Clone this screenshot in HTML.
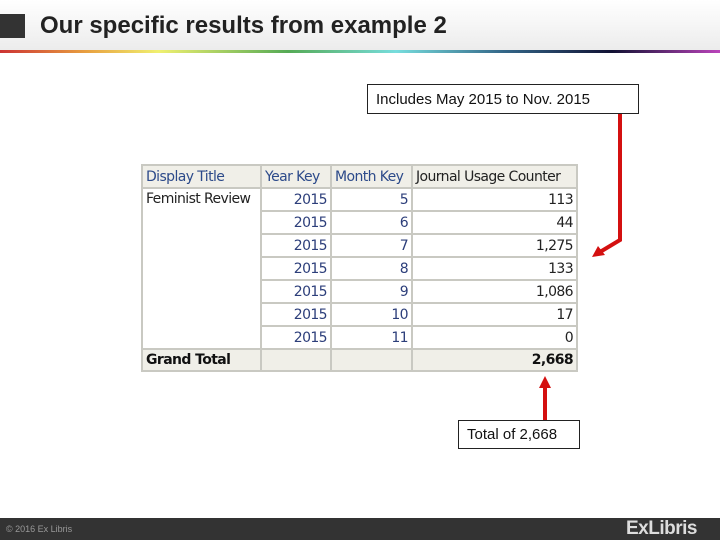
<!DOCTYPE html>
<html><head><style>
body{margin:0;width:720px;height:540px;position:relative;background:#fff;font-family:"Liberation Sans",sans-serif;overflow:hidden}
.hdr{position:absolute;left:0;top:0;width:720px;height:50px;background:linear-gradient(#fff,#ececec)}
.sq{position:absolute;left:0;top:14px;width:25px;height:24px;background:#333}
.ttl{position:absolute;left:40px;top:12px;font-size:24px;font-weight:bold;color:#222;white-space:nowrap}
.rb{position:absolute;left:0;top:50px;width:720px;height:3px;background:linear-gradient(90deg,#c33,#e8a040 12%,#f0f070 22%,#5a5 40%,#7dd 55%,#368 70%,#113 85%,#b4b)}
.box{position:absolute;border:1px solid #222;background:#fff;font-size:15px;color:#111;box-sizing:border-box}
table{position:absolute;left:141px;top:164px;border-collapse:collapse;font-family:"DejaVu Sans",sans-serif;font-size:14px;letter-spacing:-0.6px}
td{border:2px solid #c9c9c2;height:19px;padding:0 3px;box-sizing:border-box}
.h td{background:#f0efe8;color:#2c4a8a}
.h td:last-child{color:#222}
.n{text-align:right;color:#2c3e7a}
.c{text-align:right;color:#222}
.g td{background:#f0efe8;font-weight:bold;color:#111}
.ft{position:absolute;left:0;top:518px;width:720px;height:22px;background:#333}
</style></head><body>
<div class="hdr"></div><div class="sq"></div>
<div class="ttl">Our specific results from example 2</div>
<div class="rb"></div>
<div class="box" style="left:367px;top:84px;width:272px;height:30px;padding:6px 0 0 8px">Includes May 2015 to Nov. 2015</div>
<table>
<tr class="h" style="height:23px"><td style="width:119px">Display Title</td><td style="width:70px">Year Key</td><td style="width:81px">Month Key</td><td style="width:165px">Journal Usage Counter</td></tr>
<tr style="height:23px"><td rowspan="7" style="vertical-align:top;color:#222;padding-top:2px">Feminist Review</td><td class="n">2015</td><td class="n">5</td><td class="c">113</td></tr>
<tr style="height:23px"><td class="n">2015</td><td class="n">6</td><td class="c">44</td></tr>
<tr style="height:23px"><td class="n">2015</td><td class="n">7</td><td class="c">1,275</td></tr>
<tr style="height:23px"><td class="n">2015</td><td class="n">8</td><td class="c">133</td></tr>
<tr style="height:23px"><td class="n">2015</td><td class="n">9</td><td class="c">1,086</td></tr>
<tr style="height:23px"><td class="n">2015</td><td class="n">10</td><td class="c">17</td></tr>
<tr style="height:23px"><td class="n">2015</td><td class="n">11</td><td class="c">0</td></tr>
<tr class="g" style="height:22px"><td>Grand Total</td><td></td><td></td><td style="text-align:right">2,668</td></tr>
</table>
<svg style="position:absolute;left:0;top:0" width="720" height="540">
<path d="M620 114 L620 240 L600 252" stroke="#d41010" stroke-width="4" fill="none"/>
<polygon points="592,257 598,246 605,255" fill="#d41010"/>
<path d="M545 421 L545 386" stroke="#d41010" stroke-width="4" fill="none"/>
<polygon points="545,376 539,388 551,388" fill="#d41010"/>
</svg>
<div class="box" style="left:458px;top:420px;width:122px;height:29px;padding:5px 0 0 8px">Total of 2,668</div>
<div class="ft"></div>
<div style="position:absolute;left:6px;top:524px;font-size:9px;color:#999">© 2016 Ex Libris</div>
<div style="position:absolute;left:626px;top:518px;font-size:19px;color:#ddd;font-weight:bold;letter-spacing:-0.5px">ExLibris</div>
</body></html>
